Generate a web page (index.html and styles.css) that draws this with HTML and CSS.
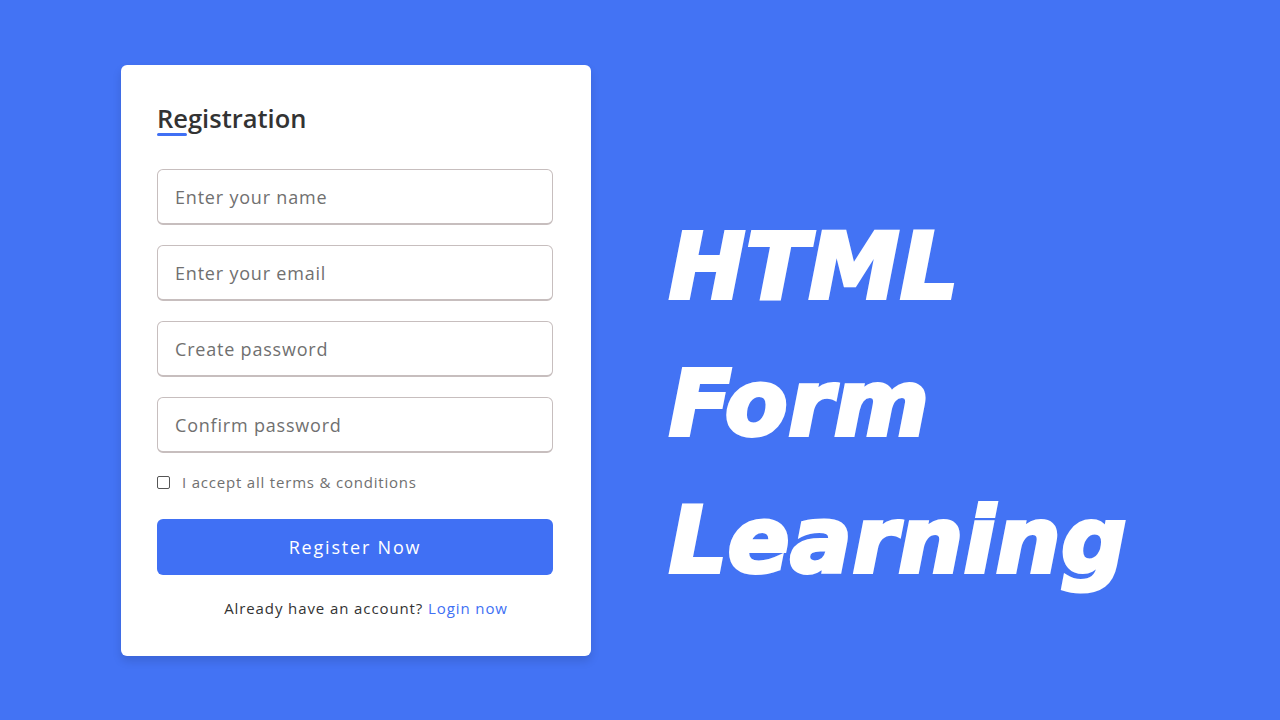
FILE: index.html
```html
<!DOCTYPE html>
<html lang="en">
<head>
<meta charset="utf-8">
<title>Registration</title>
<link rel="stylesheet" href="styles.css">
</head>
<body>
  <div class="card">
    <h2 class="title">Registration</h2>
    <form class="form">
      <div class="field"><input type="text" placeholder="Enter your name"></div>
      <div class="field"><input type="text" placeholder="Enter your email"></div>
      <div class="field"><input type="password" placeholder="Create password"></div>
      <div class="field"><input type="password" placeholder="Confirm password"></div>
      <label class="policy"><span class="box"></span><span>I accept all terms &amp; conditions</span></label>
      <button type="button" class="btn">Register Now</button>
      <p class="login">Already have an account? <a href="#">Login now</a></p>
    </form>
  </div>
  <div class="headline">
    <div>HTML</div>
    <div>Form</div>
    <div>Learning</div>
  </div>
</body>
</html>
```
FILE: styles.css
```css
* { box-sizing: border-box; }
html, body { margin: 0; height: 100%; }
body {
  background: #4373f4;
  font-family: "Open Sans", "Liberation Sans", sans-serif;
  display: flex;
  align-items: flex-start;
  padding-left: 121px;
}
.card {
  margin-top: 65px;
  width: 470px;
  background: #fff;
  border-radius: 6px;
  box-shadow: 0 5px 10px rgba(0,0,0,0.12);
  padding: 35px 38px 37px 36px;
}
.title {
  position: relative;
  margin: 0;
  font-size: 25.5px;
  line-height: 36px;
  font-weight: 600;
  color: #333;
}
.title::before {
  content: "";
  position: absolute;
  left: 0;
  bottom: 0;
  width: 30px;
  height: 3px;
  border-radius: 2px;
  background: #4070f4;
}
.form { margin-top: 33px; display: flex; flex-direction: column; }
.field { height: 56px; margin-bottom: 20px; }
.field:nth-child(4) { margin-bottom: 0; }
.field input {
  width: 100%;
  height: 100%;
  border: 1.5px solid #c7bebe;
  border-bottom-width: 2px;
  border-radius: 6px;
  padding: 0 17px;
  font-family: inherit;
  font-size: 18px;
  letter-spacing: 0.8px;
  color: #333;
  outline: none;
}
.field input::placeholder { color: #707070; }
.policy {
  margin-top: 18px;
  height: 22px;
  display: flex;
  align-items: center;
  gap: 12px;
  font-size: 15px;
  letter-spacing: 0.8px;
  color: #707070;
}
.box {
  width: 13px;
  height: 13px;
  border: 1.5px solid #555;
  border-radius: 2px;
  flex: none;
}
.btn {
  margin-top: 26px;
  height: 56px;
  border: none;
  border-radius: 6px;
  background: #4070f4;
  color: #fff;
  font-family: inherit;
  font-size: 18px;
  letter-spacing: 1.8px;
}
.login {
  margin: 22px 0 0;
  line-height: 22px;
  font-size: 15px;
  letter-spacing: 0.9px;
  color: #333;
  text-align: center;
  padding-left: 22px;
}
.login a { color: #4070f4; text-decoration: none; }
.headline {
  margin-top: 198px;
  margin-left: 78px;
  font-family: "DejaVu Sans", sans-serif;
  font-weight: bold;
  font-style: italic;
  font-size: 91px;
  line-height: 137px;
  letter-spacing: 0.8px;
  color: #fff;
  -webkit-text-stroke: 4px #fff;
}
```
